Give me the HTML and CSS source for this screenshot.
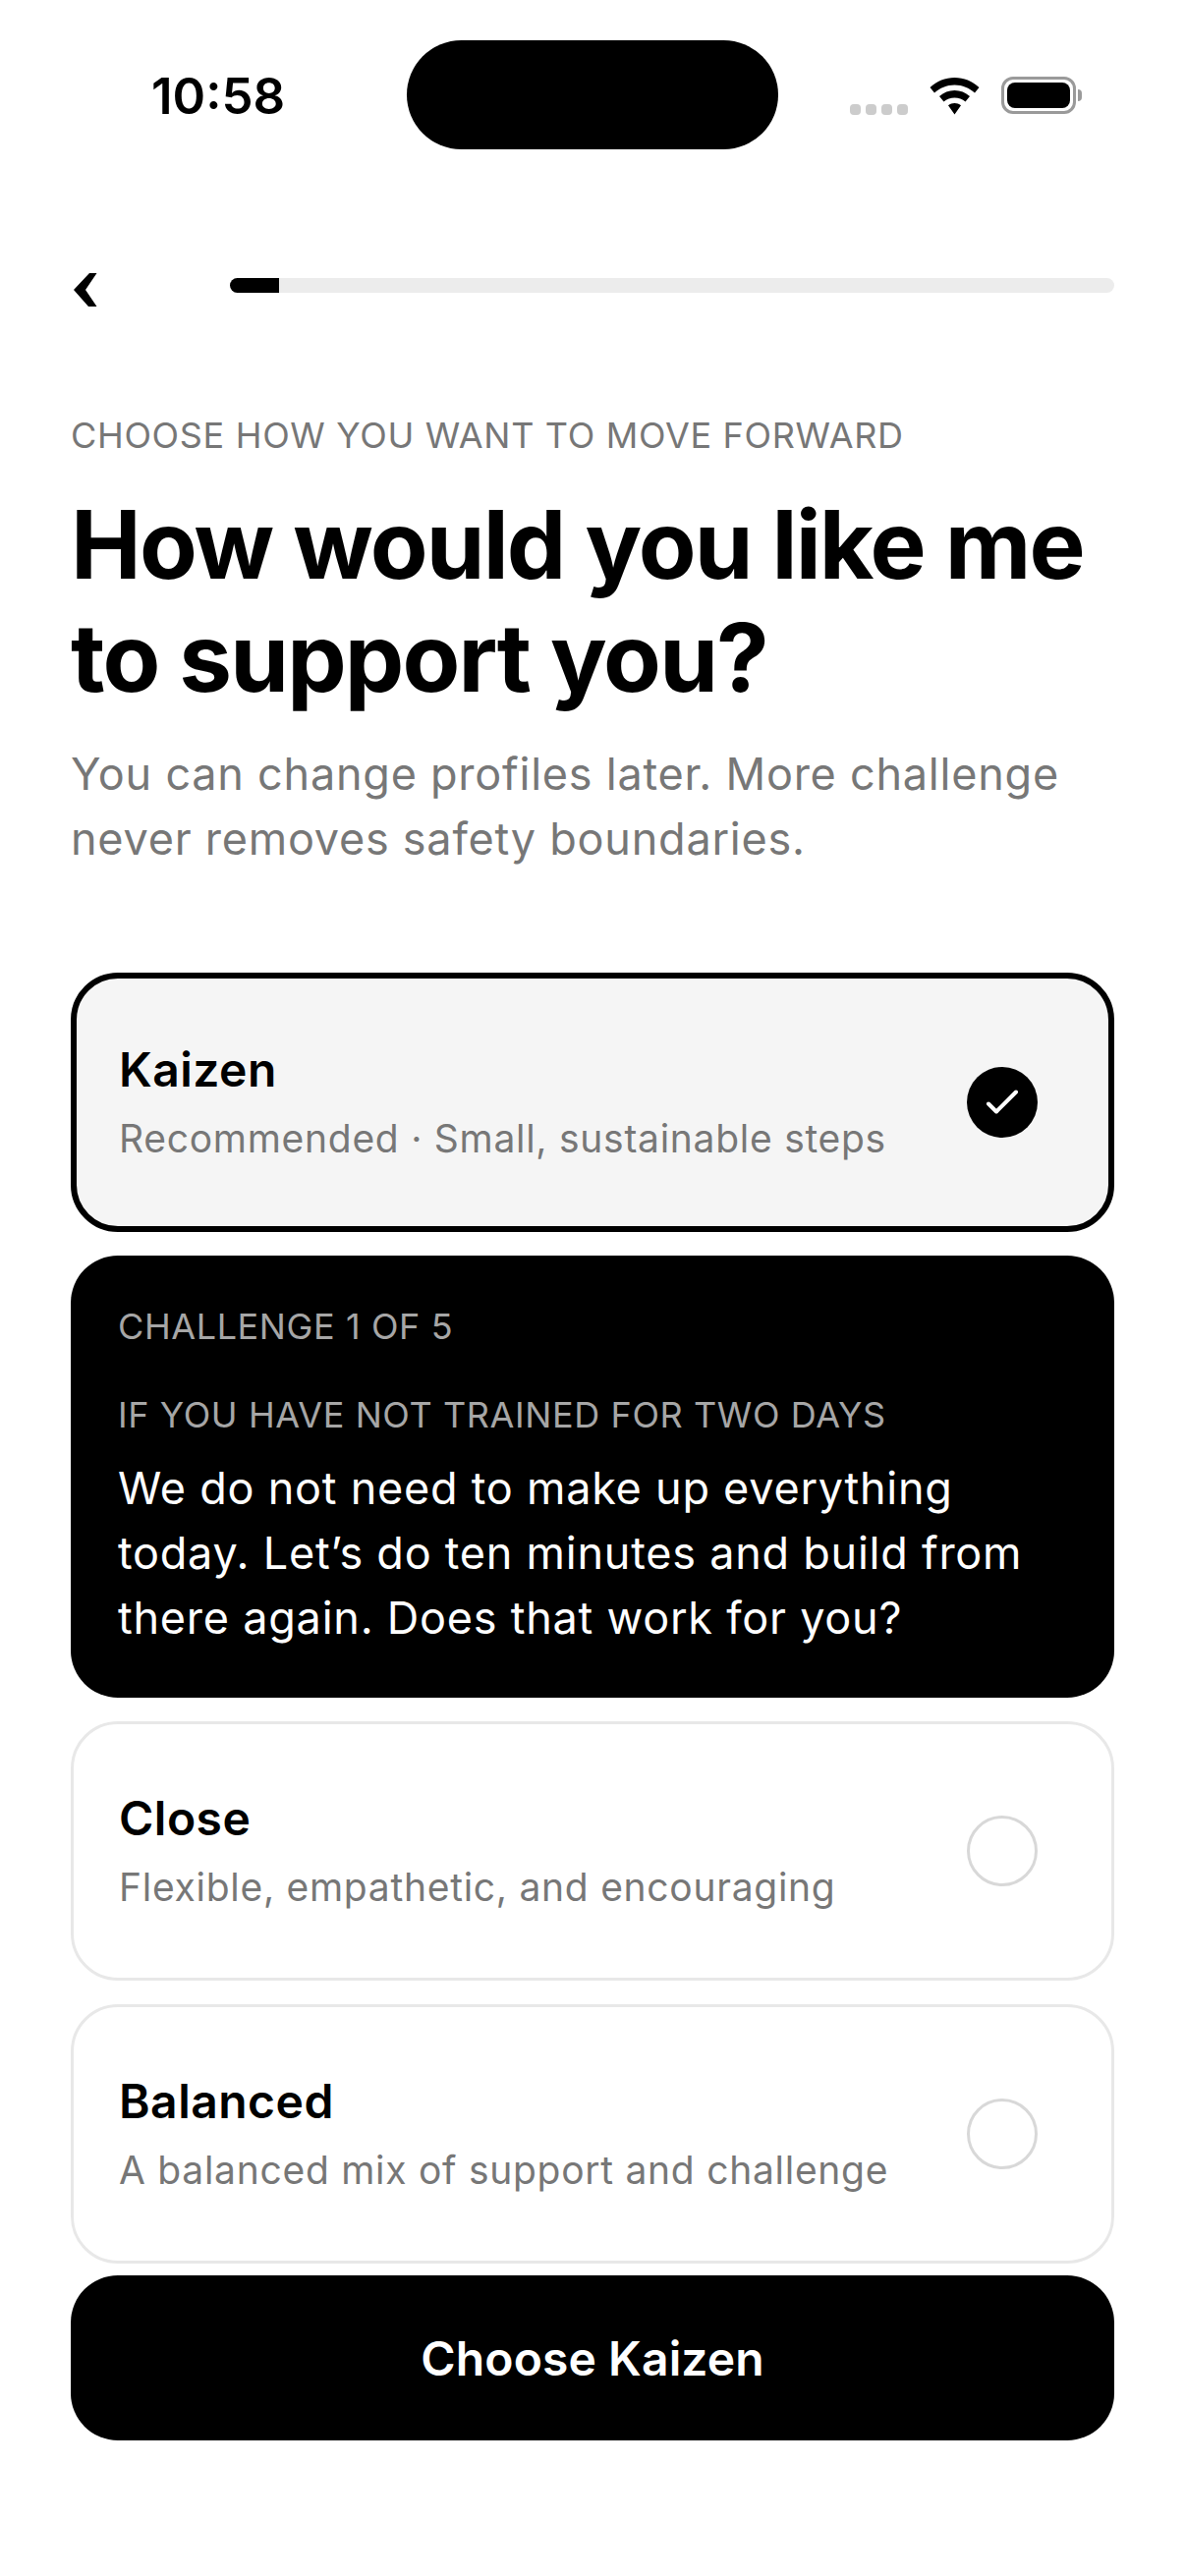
FILE: index.html
```html
<!DOCTYPE html>
<html lang="en">
<head>
<meta charset="utf-8">
<title>Choose profile</title>
<link rel="stylesheet" href="styles.css">
</head>
<body>
<div class="screen">
  <header class="status">
    <span class="time">10:58</span>
    <div class="island"></div>
    <div class="status-icons">
      <div class="signal"><i></i><i></i><i></i><i></i></div>
      <svg class="wifi" width="51" height="38" viewBox="0 0 51 38"><path d="M25.500 0C16 0 7.500 3.500 0.500 10L5 15.500C10.500 10.500 17.500 7.500 25.500 7.500C33.500 7.500 40.500 10.500 46 15.500L50.500 10C43.500 3.500 35 0 25.500 0Z M25.500 13C19.500 13 14.500 15 10 19L14.500 24.500C17.500 22 21.500 20.500 25.500 20.500C29.500 20.500 33.500 22 36.500 24.500L41 19C36.500 15 31.500 13 25.500 13Z M25.500 26C23 26 21 26.800 19 28.300L25.500 37.500L32 28.300C30 26.800 28 26 25.500 26Z"/></svg>
      <div class="battery"><div class="battery-level"></div></div>
      <div class="battery-cap"></div>
    </div>
  </header>

  <nav class="topbar">
    <svg class="back" width="24" height="34" viewBox="0 0 24 34"><path d="M16 0H23.500L12 17L23.500 34H15L0 17Z"/></svg>
    <div class="progress"><div class="progress-fill"></div></div>
  </nav>

  <main class="content">
    <p class="kicker">CHOOSE HOW YOU WANT TO MOVE FORWARD</p>
    <h1 class="title">How would you like me to support you?</h1>
    <p class="lede">You can change profiles later. More challenge never removes safety boundaries.</p>

    <div class="options">
      <section class="card card-selected">
        <div class="card-text">
          <h2 class="card-name">Kaizen</h2>
          <p class="card-desc">Recommended · Small, sustainable steps</p>
        </div>
        <div class="radio radio-on">
          <svg width="34" height="28" viewBox="0 0 34 28"><path d="M3 15.500L11 23.500L31 3.500" fill="none" stroke="#fff" stroke-width="4" stroke-linecap="round" stroke-linejoin="round"/></svg>
        </div>
      </section>

      <section class="challenge">
        <p class="challenge-count">CHALLENGE 1 OF 5</p>
        <p class="challenge-label">IF YOU HAVE NOT TRAINED FOR TWO DAYS</p>
        <p class="challenge-quote">We do not need to make up everything today. Let’s do ten minutes and build from there again. Does that work for you?</p>
      </section>

      <section class="card">
        <div class="card-text">
          <h2 class="card-name">Close</h2>
          <p class="card-desc">Flexible, empathetic, and encouraging</p>
        </div>
        <div class="radio"></div>
      </section>

      <section class="card">
        <div class="card-text">
          <h2 class="card-name">Balanced</h2>
          <p class="card-desc">A balanced mix of support and challenge</p>
        </div>
        <div class="radio"></div>
      </section>
    </div>

    <button class="cta">Choose Kaizen</button>
  </main>
</div>
</body>
</html>
```
FILE: styles.css
```css
* { box-sizing: border-box; margin: 0; padding: 0; }
html, body { background: #fff; }
body { font-family: Inter, "Liberation Sans", sans-serif; color: #000; }
.screen { width: 1206px; height: 2622px; overflow: hidden; display: flex; flex-direction: column; }

.status { height: 152px; padding: 41px 72px 0 0; display: flex; align-items: flex-start; }
.time { width: 414px; height: 111px; line-height: 114px; padding-left: 154px; font-size: 51px; font-weight: 600; letter-spacing: 0; }
.island { width: 378px; height: 111px; border-radius: 56px; background: #000; flex: none; }
.status-icons { flex: 1; height: 111px; display: flex; align-items: flex-start; padding: 37px 0 0 73px; }
.signal { display: flex; gap: 5.500px; margin: 28px 22px 0 0; }
.signal i { width: 10.500px; height: 10.500px; border-radius: 4px; background: #ccc; }
.wifi { flex: none; margin: 1px 22px 0 0; }
.battery { width: 76px; height: 38px; border: 3px solid #9a9a9a; border-radius: 12px; padding: 3px; flex: none; }
.battery-level { width: 100%; height: 100%; background: #000; border-radius: 8px; }
.battery-cap { width: 4px; height: 12px; margin: 13px 0 0 2px; background: #9a9a9a; border-radius: 0 4px 4px 0; }

.topbar { height: 60px; margin-top: 113px; padding: 0 72px 0 75px; display: flex; align-items: center; gap: 135px; }
.back { flex: none; }
.progress { flex: 1; height: 15px; margin-top: -10px; border-radius: 8px; background: #ececec; overflow: hidden; }
.progress-fill { width: 50px; height: 100%; background: #000; }

.content { padding: 0 72px; display: flex; flex-direction: column; }
.kicker { margin-top: 96px; font-size: 36px; line-height: 44px; letter-spacing: 0.680px; color: #777; }
.title { margin-top: 32px; font-size: 96px; line-height: 115px; font-weight: 700; letter-spacing: -1.840px; }
.lede { margin-top: 28px; font-size: 45px; line-height: 66px; letter-spacing: 0.760px; color: #777; }

.options { margin-top: 103px; display: flex; flex-direction: column; gap: 24px; }
.card { height: 264px; border: 3px solid #e8e8e8; border-radius: 48px; padding: 0 75px 0 46px; display: flex; align-items: center; justify-content: space-between; }
.card-selected { border: 6px solid #000; background: #f5f5f5; padding: 0 72px 0 43px; }
.card-name { font-size: 48px; line-height: 60px; font-weight: 600; letter-spacing: 0.480px; }
.card-desc { margin-top: 14px; font-size: 39px; line-height: 52px; letter-spacing: 0.720px; color: #777; }
.radio { width: 72px; height: 72px; border-radius: 50%; border: 3px solid #d8d8d8; display: flex; align-items: center; justify-content: center; flex: none; }
.radio-on { background: #000; border: none; }

.challenge { height: 450px; border-radius: 48px; background: #000; padding: 50px 48px 0; color: #fff; }
.challenge-count { font-size: 36px; line-height: 44px; letter-spacing: 0.600px; color: #a6a6a6; }
.challenge-label { margin-top: 46px; font-size: 36px; line-height: 44px; letter-spacing: 0.600px; color: #a6a6a6; }
.challenge-quote { margin-top: 20px; font-size: 45px; line-height: 66px; letter-spacing: 0.760px; }

.cta { margin-top: 12px; height: 168px; border: none; border-radius: 48px; background: #000; color: #fff; font-family: inherit; font-size: 48px; font-weight: 600; letter-spacing: 0.100px; }
```
